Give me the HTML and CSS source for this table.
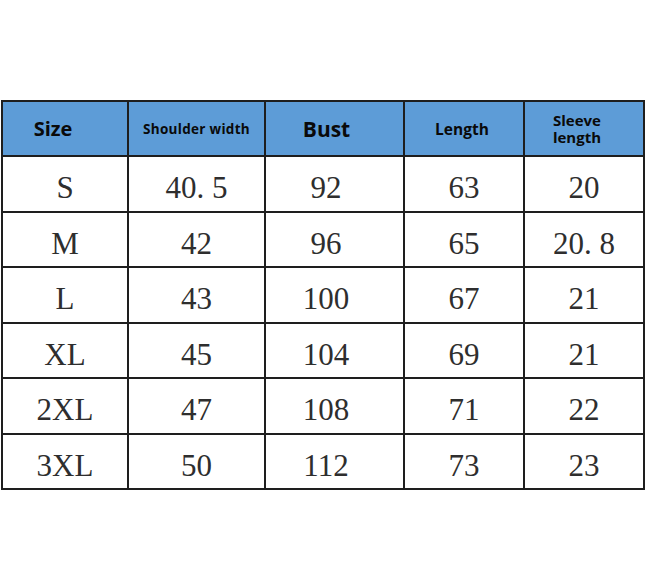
FILE: index.html
```html
<!DOCTYPE html>
<html>
<head>
<meta charset="utf-8">
<link rel="stylesheet" href="styles.css">
</head>
<body>
<div class="page">
  <table class="sizes">
    <colgroup>
      <col class="c1"><col class="c2"><col class="c3"><col class="c4"><col class="c5">
    </colgroup>
    <thead>
      <tr class="head">
        <th class="h-size">Size</th>
        <th class="h-shoulder">Shoulder width</th>
        <th class="h-bust">Bust</th>
        <th class="h-length">Length</th>
        <th class="h-sleeve">Sleeve<br>length</th>
      </tr>
    </thead>
    <tbody>
      <tr><td>S</td><td>40. 5</td><td class="bust">92</td><td>63</td><td>20</td></tr>
      <tr><td>M</td><td>42</td><td class="bust">96</td><td>65</td><td>20. 8</td></tr>
      <tr><td>L</td><td>43</td><td class="bust">100</td><td>67</td><td>21</td></tr>
      <tr><td>XL</td><td>45</td><td class="bust">104</td><td>69</td><td>21</td></tr>
      <tr><td>2XL</td><td>47</td><td class="bust">108</td><td>71</td><td>22</td></tr>
      <tr><td>3XL</td><td>50</td><td class="bust">112</td><td>73</td><td>23</td></tr>
    </tbody>
  </table>
</div>
</body>
</html>
```

FILE: styles.css
```css
html, body {
  margin: 0;
  padding: 0;
  background: #ffffff;
}

.page {
  width: 645px;
  height: 587px;
  padding-top: 100px;
  box-sizing: border-box;
}

.sizes {
  border-collapse: collapse;
  table-layout: fixed;
  width: 642px;
  margin-left: 1px;
}

.c1 { width: 126px; }
.c2 { width: 137px; }
.c3 { width: 139px; }
.c4 { width: 120px; }
.c5 { width: 120px; }

.sizes th,
.sizes td {
  border: 2px solid #1e1e1e;
  padding: 0;
  text-align: center;
  vertical-align: middle;
}

.sizes .head th {
  background: #5d9cd7;
  color: #0a0a0a;
  font-family: "Open Sans", "Noto Sans", sans-serif;
  font-weight: 700;
  height: 53px;
}

.sizes .head .h-size { font-size: 20px; padding-right: 24px; }
.sizes .head .h-shoulder { font-size: 13.5px; letter-spacing: 0.3px; }
.sizes .head .h-bust { font-size: 21px; padding-right: 16px; }
.sizes .head .h-length { font-size: 15.5px; padding-right: 4px; }
.sizes .head .h-sleeve { font-size: 15px; line-height: 17px; padding-right: 14px; }

.sizes td {
  height: 45.5px;
  padding-top: 8px;
  font-family: "Liberation Serif", "DejaVu Serif", serif;
  font-size: 31px;
  color: #2e2e2e;
  line-height: 1;
}

.sizes td.bust { padding-right: 17px; }
```
